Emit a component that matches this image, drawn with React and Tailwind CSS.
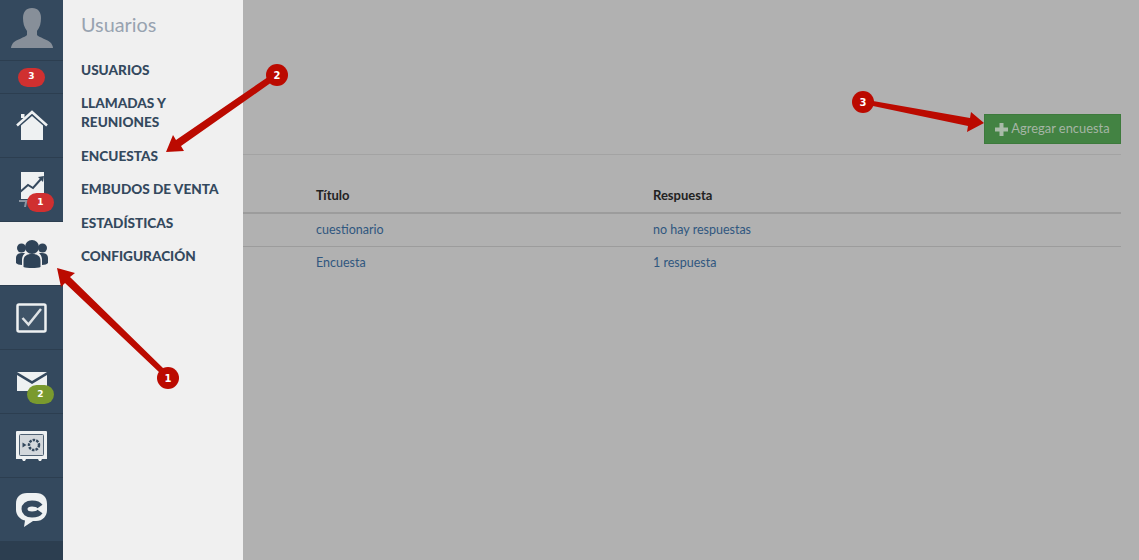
const font = { fontFamily: 'Lato, "Open Sans", sans-serif' }

const Avatar = () => (
  <svg width="44" height="40" viewBox="0 0 44 40">
    <path d="M22 0c-6 0-9 4-9 10 0 5 1 9 4 13v4c-1 2-12 5-14 8-1 2-2 3-2 5h42c0-2-1-3-2-5-2-3-13-6-14-8v-4c3-4 4-8 4-13 0-6-3-10-9-10z" fill="#878f99" />
  </svg>
)

const Home = () => (
  <svg width="32" height="31" viewBox="0 0 32 31">
    <path d="M1 15.500 16 2l15 13.500" fill="none" stroke="#eef1f2" strokeWidth="2.500" />
    <path d="M5 4h3.500v4H5z" fill="#eef1f2" />
    <path d="M5 15.500 16 6l11 9.500V30H5z" fill="#eef1f2" />
  </svg>
)

const Chart = () => (
  <svg width="26" height="36" viewBox="0 0 26 36">
    <path d="M2 0h23v27H2z" fill="#eef1f2" />
    <path d="M1 20 9 13l5 3 8-9" fill="none" stroke="#34495e" strokeWidth="2" />
    <path d="m19 5 6-1-1 6z" fill="#34495e" />
    <path d="M0 28h14v2H8l-1 5H5l1-5H0z" fill="#8d97a3" />
  </svg>
)

const Users = () => (
  <svg width="32" height="28" viewBox="0 0 32 28" fill="#2f4358">
    <circle cx="16" cy="7" r="7" />
    <circle cx="5.500" cy="8" r="4.500" />
    <circle cx="26.500" cy="8" r="4.500" />
    <path d="M7.500 27v-6c0-5 3-7 8.500-7s8.500 2 8.500 7v6c-3 1.300-14 1.300-17 0z" />
    <path d="M0 23v-5c0-3 2-5 6-5h3c-2 2-3 4-3 7v5c-3 0-5-1-6-2zM32 23v-5c0-3-2-5-6-5h-3c2 2 3 4 3 7v5c3 0 5-1 6-2z" />
  </svg>
)

const Check = () => (
  <svg width="31" height="30" viewBox="0 0 31 30">
    <rect x="1.500" y="1.500" width="28" height="27" rx="1.500" fill="#3f5468" stroke="#eef1f2" strokeWidth="2.500" />
    <path d="m6.500 15 6 6.500L25 6" fill="none" stroke="#dfe3e6" strokeWidth="2.500" />
  </svg>
)

const Mail = () => (
  <svg width="30" height="19" viewBox="0 0 30 19">
    <path d="M0 0h30L15 9z" fill="#eef1f2" />
    <path d="M0 3v16h30V3L15 12z" fill="#eef1f2" />
  </svg>
)

const Safe = () => (
  <svg width="31" height="30" viewBox="0 0 31 30">
    <path d="M1 0h29a1 1 0 0 1 1 1v27h-5l-1 2h-2l-1-2H10l-1 2H7l-1-2H0V1a1 1 0 0 1 1-1z" fill="#eef1f2" />
    <rect x="3.500" y="3.500" width="24" height="21" rx="1" fill="#d3d8dc" stroke="#4f6173" />
    <circle cx="18" cy="14" r="5" fill="none" stroke="#34495e" strokeWidth="2.500" strokeDasharray="2.500 1.100" />
    <path d="m6.500 11.500 4 2.500-4 2.500z" fill="#34495e" />
  </svg>
)

const Logo = () => (
  <svg width="31" height="34" viewBox="0 0 31 34">
    <path d="M11 0h9c7 0 11 4 11 11v6c0 6-4 11-11 11h-3l-9 6 1-6.500C4 26.500 0 22 0 17v-6C0 4 4 0 11 0z" fill="#eef1f2" />
    <path d="M24 13.500c-1-1.500-4-3-8-3-5 0-7.500 2.500-7.500 5.500s2.500 5.500 7.500 5.500c4 0 7-1.500 8-3" fill="none" stroke="#34495e" strokeWidth="6" />
  </svg>
)

const Badge = ({ value, color, className }) => (
  <span
    className={`flex h-[19px] w-[27px] items-center justify-center rounded-full text-[9px] font-black text-white ${color} ${className}`}
    style={{ fontFamily: '"DejaVu Sans", sans-serif' }}
  >
    {value}
  </span>
)

const NavItem = ({ children, active }) => (
  <div
    className={`relative flex h-[64px] items-center justify-center border-b border-[#2c3e50] ${
      active ? 'bg-[#f0f0f0]' : ''
    }`}
  >
    {children}
  </div>
)

const menu = [
  'USUARIOS',
  'LLAMADAS Y REUNIONES',
  'ENCUESTAS',
  'EMBUDOS DE VENTA',
  'ESTADÍSTICAS',
  'CONFIGURACIÓN',
]

const rows = [
  ['cuestionario', 'no hay respuestas'],
  ['Encuesta', '1 respuesta'],
]

const Marker = ({ x, y, n }) => (
  <g>
    <circle cx={x} cy={y} r="11" fill="#bb0a00" />
    <text
      x={x}
      y={y + 3.500}
      textAnchor="middle"
      fontSize="10"
      fontWeight="900"
      fill="#fff"
      fontFamily="DejaVu Sans, sans-serif"
    >
      {n}
    </text>
  </g>
)

// callouts that sit over the page
const Arrows = () => (
  <svg className="pointer-events-none absolute inset-0" width="1139" height="560" viewBox="0 0 1139 560">
    <g fill="#bb0a00">
      <path d="M57 268 75 273 70 277 164 369 160 373 65 283 61 287Z" />
      <path d="M166 152 173 135 176 140 268 77 272 82 181 146 184 151Z" />
      <path d="M984 123 971 112 970 118 873 101 873 106 968 126 967 132Z" />
    </g>
    <Marker x={168} y={378} n="1" />
    <Marker x={277} y={75} n="2" />
    <Marker x={863} y={102} n="3" />
  </svg>
)

export default function App() {
  return (
    <div className="relative flex h-[560px] w-[1139px] overflow-hidden bg-[#b1b1b1]" style={font}>
      <nav className="flex w-[63px] shrink-0 flex-col bg-[#2c3e50]">
        <div className="flex h-[61px] items-end justify-center border-b border-[#2c3e50] bg-[#34495e] pb-[12px]">
          <Avatar />
        </div>
        <div className="flex h-[33px] items-center justify-center border-b border-[#2c3e50] bg-[#34495e]">
          <Badge value="3" color="bg-[#d03030]" />
        </div>
        <div className="bg-[#34495e]">
          <NavItem><Home /></NavItem>
          <NavItem>
            <Chart />
            <Badge value="1" color="bg-[#d03030]" className="absolute left-[27px] top-[35px]" />
          </NavItem>
          <NavItem active><Users /></NavItem>
          <NavItem><Check /></NavItem>
          <NavItem>
            <Mail />
            <Badge value="2" color="bg-[#7a9a2e]" className="absolute left-[27px] top-[35px]" />
          </NavItem>
          <NavItem><Safe /></NavItem>
          <NavItem><Logo /></NavItem>
        </div>
      </nav>

      <aside className="w-[180px] shrink-0 bg-[#f0f0f0] px-[18px]">
        <h2 className="mt-[12px] text-[19.800px] leading-[24px] text-[#98a3b0]">Usuarios</h2>
        <ul className="mt-[17.500px] flex flex-col">
          {menu.map((item) => (
            <li key={item} className="w-[145px] py-[7.250px] text-[13.600px] font-black leading-[19px] text-[#34495e]">
              {item}
            </li>
          ))}
        </ul>
      </aside>

      <main className="flex-1 pr-[18px] pt-[114px]">
        <div className="flex justify-end border-b border-[#a3a3a3] pb-[10px]">
          <button className="flex h-[30px] w-[137px] items-center justify-center gap-[3px] border border-[#3d7a3c] bg-[#438343] text-[12.900px] text-[#a5b5a5]">
            <svg width="13" height="13" viewBox="0 0 13 13" fill="#a9bba9">
              <path d="M4.500 0h4v4.500H13v4H8.500V13h-4V8.500H0v-4h4.500z" />
            </svg>
            Agregar encuesta
          </button>
        </div>
        <div className="mt-[25px] text-[12.500px]">
          <div className="grid h-[34px] grid-cols-[73px_337px_1fr] items-center border-b-2 border-[#9c9c9c] text-[13px] font-bold text-[#222]">
            <span />
            <span>Título</span>
            <span>Respuesta</span>
          </div>
          {rows.map(([title, answer], i) => (
            <div
              key={title}
              className={`grid h-[33px] grid-cols-[73px_337px_1fr] items-center text-[#30577f] ${
                i === 0 ? 'border-b border-[#9c9c9c]' : ''
              }`}
            >
              <span />
              <span>{title}</span>
              <span>{answer}</span>
            </div>
          ))}
        </div>
      </main>

      <Arrows />
    </div>
  )
}
